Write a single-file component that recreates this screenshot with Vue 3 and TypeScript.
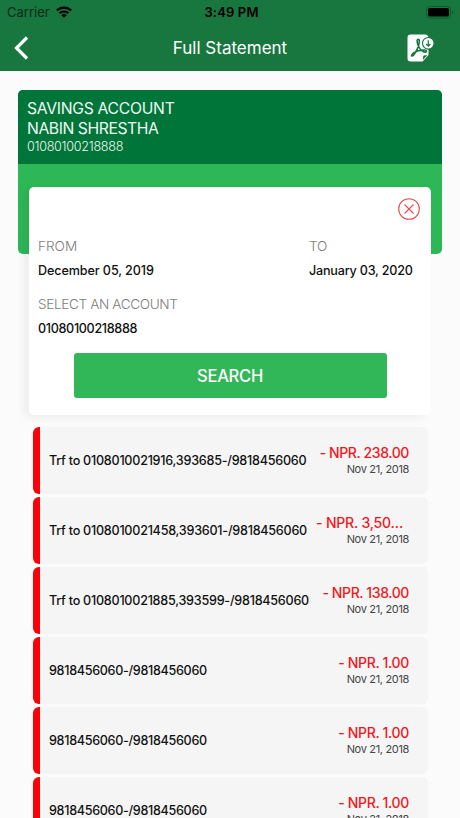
<script setup lang="ts">
interface Transaction {
  id: number
  title: string
  amount: string
  date: string
  size: 'long' | 'short'
}

const transactions: Transaction[] = [
  { id: 1, title: 'Trf to 0108010021916,393685-/9818456060', amount: '- NPR. 238.00', date: 'Nov 21, 2018', size: 'long' },
  { id: 2, title: 'Trf to 0108010021458,393601-/9818456060', amount: '- NPR. 3,50…', date: 'Nov 21, 2018', size: 'long' },
  { id: 3, title: 'Trf to 0108010021885,393599-/9818456060', amount: '- NPR. 138.00', date: 'Nov 21, 2018', size: 'long' },
  { id: 4, title: '9818456060-/9818456060', amount: '- NPR. 1.00', date: 'Nov 21, 2018', size: 'short' },
  { id: 5, title: '9818456060-/9818456060', amount: '- NPR. 1.00', date: 'Nov 21, 2018', size: 'short' },
  { id: 6, title: '9818456060-/9818456060', amount: '- NPR. 1.00', date: 'Nov 21, 2018', size: 'short' },
]
</script>

<template>
  <main class="screen">
    <header class="header">
      <div class="status">
        <div class="carrier">
          <span class="carrier-name">Carrier</span>
          <svg class="wifi" width="16" height="12" viewBox="0 0 16 12">
            <path d="M.9 4.6a10 10 0 0 1 14.2 0M3.6 7.3a6.3 6.3 0 0 1 8.8 0" fill="none" stroke="#000" stroke-width="2.2" />
            <path d="M8 11.7 5.4 9.2a3.6 3.6 0 0 1 5.2 0Z" />
          </svg>
        </div>
        <span class="clock">3:49 PM</span>
        <svg class="battery" width="28" height="13" viewBox="0 0 28 13">
          <rect x=".5" y=".5" width="24" height="11.6" rx="3.4" fill="none" stroke="#0f5a2e" />
          <rect x="2" y="2" width="21" height="8.6" rx="1.8" />
          <path d="M26 4.4c1.8.7 1.8 3.1 0 3.8Z" fill="#0f5a2e" />
        </svg>
      </div>
      <div class="nav">
        <svg class="back" width="18" height="26" viewBox="0 0 18 26">
          <path d="M14 2.5 3.5 13 14 23.5" fill="none" stroke="#fff" stroke-width="3.2" />
        </svg>
        <h1 class="title">Full Statement</h1>
        <svg class="pdf" width="28" height="28" viewBox="0 0 28 28">
          <path d="M3.7.5H18c2 0 3.5 1.3 3.5 3.2v17.2l-5.8 6.6h-12a3.2 3.2 0 0 1-3.2-3.2V3.7A3.2 3.2 0 0 1 3.7.5Z" fill="#fff" />
          <path d="M16 25.7v-2.4c0-1.3.8-2 2-2h2.3Z" fill="#18763f" />
          <path d="M11.2 5.4c-1.5 0-1.3 2.9-.1 6 1.5 3.5 4.6 6.8 7.2 6.7 1.8-.2 1.3-2-.7-2.1-3.2-.2-7.8.8-10.7 2.6-3.6 2.3-2.7 4.9-.4 2.5 2.4-2.6 5.5-9 5.8-13.1.1-1.6-.1-2.6-1.1-2.6Z" fill="none" stroke="#18763f" stroke-width="1.6" />
          <circle cx="21.3" cy="9.3" r="5.8" fill="#fff" stroke="#18763f" stroke-width="1.1" />
          <path d="M21.3 6.2v5.9M19.2 10l2.1 2.1 2.1-2.1" fill="none" stroke="#18763f" stroke-width="1.2" />
        </svg>
      </div>
    </header>

    <section class="account">
      <div class="account-info">
        <p class="account-type">SAVINGS ACCOUNT</p>
        <p class="account-owner">NABIN SHRESTHA</p>
        <p class="account-number">01080100218888</p>
      </div>
    </section>

    <section class="filter">
      <div class="close-row">
        <svg width="22" height="22" viewBox="0 0 22 22" fill="none" stroke="#ee4b4b" stroke-width="1.1">
          <circle cx="11" cy="11" r="10.3" />
          <path d="m6.5 6.5 9 9m0-9-9 9" />
        </svg>
      </div>
      <div class="dates">
        <div>
          <p class="label from">FROM</p>
          <p class="value from-date">December 05, 2019</p>
        </div>
        <div class="to-column">
          <p class="label to">TO</p>
          <p class="value to-date">January 03, 2020</p>
        </div>
      </div>
      <p class="label select">SELECT AN ACCOUNT</p>
      <p class="value number">01080100218888</p>
      <button class="search" type="button"><span>SEARCH</span></button>
    </section>

    <ul class="list">
      <li v-for="item in transactions" :key="item.id" class="row">
        <span class="desc" :class="item.size">{{ item.title }}</span>
        <div class="side">
          <span class="amount" :class="[item.size, { clipped: item.amount.endsWith('…') }]">{{ item.amount }}</span>
          <span class="date">{{ item.date }}</span>
        </div>
      </li>
    </ul>
  </main>
</template>

<style>
body {
  margin: 0;
  overflow: hidden;
  background: #fbfbfb;
}
</style>

<style scoped>
* {
  box-sizing: border-box;
}
.screen {
  width: 460px;
  height: 818px;
  overflow: hidden;
  background: #fbfbfb;
  font-family: Inter, "Liberation Sans", sans-serif;
  color: #111;
}
p,
h1,
ul {
  margin: 0;
  padding: 0;
}
span,
p,
h1 {
  white-space: nowrap;
}
svg {
  display: block;
  flex: none;
}
.header {
  height: 71px;
  background: #18763f;
}
.status {
  display: grid;
  grid-template-columns: 1fr auto 1fr;
  align-items: center;
  height: 24px;
  padding: 0 6px 0 7px;
  color: #000;
  font-size: 13px;
}
.carrier {
  display: flex;
  align-items: center;
  gap: 6.5px;
}
.carrier-name {
  color: #0a2c18;
  letter-spacing: 0;
}
.clock {
  padding-left: 2px;
  font-weight: 600;
  letter-spacing: 0.15px;
}
.battery {
  justify-self: end;
}
.nav {
  display: grid;
  grid-template-columns: 1fr auto 1fr;
  align-items: center;
  height: 47px;
  padding: 0 25px 0 13px;
}
.title {
  padding-left: 12px;
  color: #fff;
  font-size: 17px;
  font-weight: 400;
}
.pdf {
  justify-self: end;
}
.account {
  height: 164px;
  margin: 18.5px 18px 0;
  overflow: hidden;
  border-radius: 5px;
  background: #2eb757;
}
.account-info {
  height: 74.5px;
  padding: 9px 9px 0;
  background: #00753a;
  color: #f0faf3;
}
.account-type,
.account-owner {
  font-size: 15.7px;
  line-height: 20px;
}
.account-type {
  letter-spacing: -0.28px;
}
.account-owner {
  letter-spacing: -0.42px;
}
.account-number {
  font-size: 12.6px;
  font-weight: 300;
  line-height: 15px;
  letter-spacing: -0.28px;
}
.filter {
  position: relative;
  height: 227.5px;
  margin: -66.5px 29px 0;
  padding: 11px 9px 0;
  border-radius: 5px;
  background: #fff;
  box-shadow: -5px 2px 8px rgba(0, 0, 0, 0.06);
}
.close-row {
  display: flex;
  justify-content: flex-end;
  padding-right: 2px;
}
.dates {
  display: flex;
  justify-content: space-between;
  margin-top: 16px;
}
.to-column {
  width: 113px;
}
.label {
  color: #7d7d7d;
  font-size: 13.6px;
  font-weight: 300;
  line-height: 20px;
}
.from {
  letter-spacing: 0;
}
.to {
  letter-spacing: -0.2px;
}
.value {
  color: #111;
  font-size: 12.6px;
  font-weight: 500;
  line-height: 20px;
}
.from-date,
.to-date {
  margin-top: 5px;
}
.from-date {
  letter-spacing: -0.1px;
}
.to-date {
  letter-spacing: -0.2px;
}
.select {
  margin-top: 13px;
  letter-spacing: -0.38px;
}
.number {
  margin-top: 5px;
  letter-spacing: -0.33px;
}
.search {
  display: block;
  width: 313px;
  height: 44.5px;
  margin: 14px 0 0 35.5px;
  padding: 2px 0 0;
  border: 0;
  border-radius: 3px;
  background: #31b758;
  color: #fff;
  font: 500 16.6px Inter, sans-serif;
  letter-spacing: -0.3px;
}
.list {
  display: flex;
  flex-direction: column;
  gap: 3.5px;
  margin: 12.5px 32px 0 33px;
  list-style: none;
}
.row {
  display: flex;
  flex: none;
  align-items: center;
  justify-content: space-between;
  height: 66.5px;
  padding: 0 19px 0 9px;
  border-left: 7px solid #fb0007;
  border-radius: 6px;
  background: #f5f5f5;
}
.desc {
  color: #111;
  font-size: 12.6px;
  font-weight: 500;
}
.desc.long {
  letter-spacing: -0.25px;
}
.desc.short {
  letter-spacing: -0.32px;
}
.side {
  display: flex;
  flex-direction: column;
  align-items: flex-end;
}
.amount {
  color: #f5161c;
  font-size: 14px;
  font-weight: 500;
  line-height: 18px;
}
.amount.long {
  letter-spacing: -0.4px;
}
.amount.short {
  letter-spacing: -0.33px;
}
.amount.clipped {
  padding-right: 6px;
  letter-spacing: -0.2px;
}
.date {
  color: #444;
  font-size: 11px;
  line-height: 15px;
  letter-spacing: -0.33px;
}
</style>
